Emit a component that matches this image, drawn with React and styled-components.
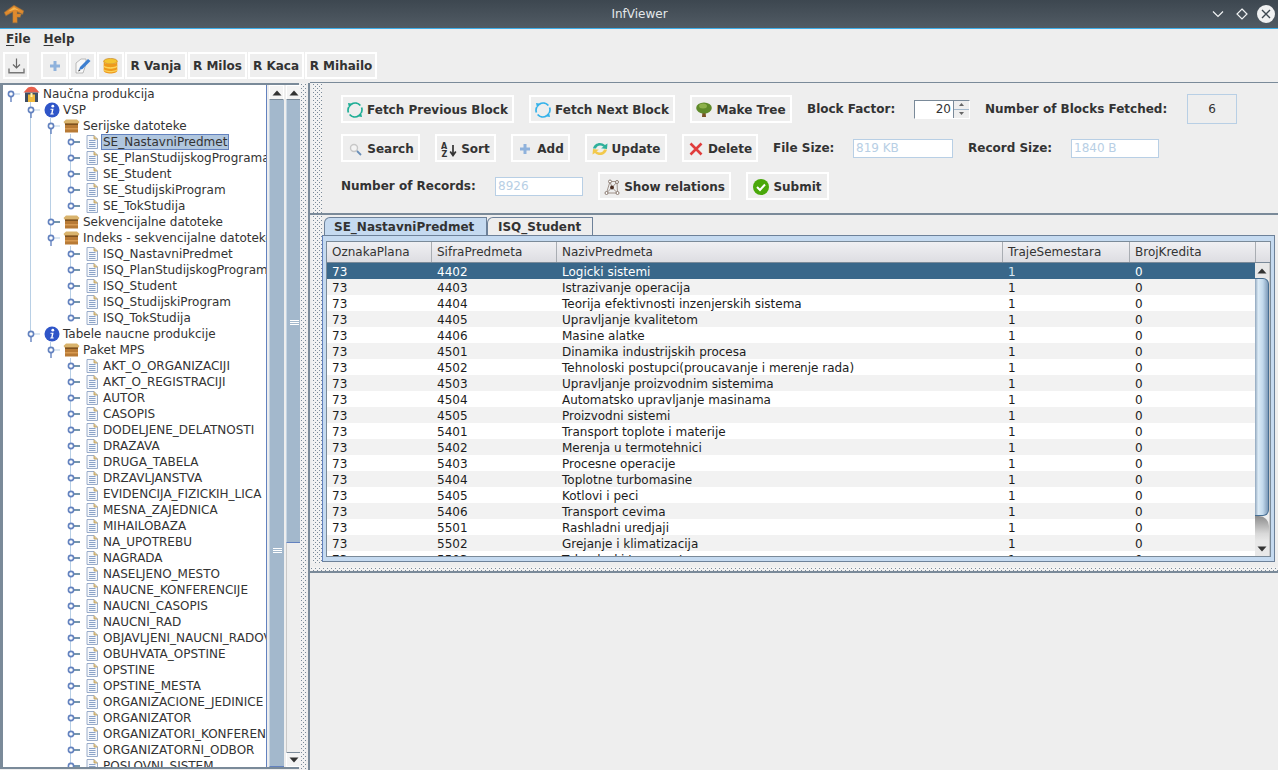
import React from 'react'
import styled, { createGlobalStyle, css } from 'styled-components'

const GlobalStyle = createGlobalStyle`
  html, body {
    margin: 0;
    padding: 0;
    background: #eeeeee;
    overflow: hidden;
  }
  * {
    box-sizing: border-box;
  }
`

// staggered dots, like the metal look and feel bumps
const bumps = css`
  background-color: #f2f2f2;
  background-image:
    conic-gradient(at 1px 1px, transparent 75%, #7a8a99 0),
    conic-gradient(at 1px 1px, transparent 75%, #7a8a99 0);
  background-size: 4px 4px, 4px 4px;
  background-position: 1px 1px, 3px 3px;
`

const Window = styled.div`
  width: 1278px;
  height: 770px;
  display: flex;
  flex-direction: column;
  overflow: hidden;
  font-family: 'DejaVu Sans', sans-serif;
  font-size: 12px;
  color: #333333;
  background: #eeeeee;
`

const TitleBar = styled.div`
  height: 29px;
  flex: none;
  display: grid;
  grid-template-columns: 1fr auto 1fr;
  align-items: center;
  padding: 0 3px 0 4px;
  background: linear-gradient(#3d4750, #515b64);
  border-bottom: 1px solid #3daee9;
`

const TitleText = styled.div`
  color: #e4e8ea;
  font-size: 12px;
`

const WindowButtons = styled.div`
  display: flex;
  align-items: center;
  justify-content: flex-end;
  gap: 8px;
`

const MenuBar = styled.div`
  height: 21px;
  flex: none;
  display: flex;
  gap: 13px;
  align-items: center;
  padding: 0 0 1px 6px;
`

const Menu = styled.span`
  font-weight: 700;
  font-size: 12px;
  color: #333333;

  u {
    text-underline-offset: 2px;
  }
`

const ToolBar = styled.div`
  height: 33px;
  flex: none;
  display: flex;
  align-items: flex-start;
  padding: 2px 0 0 3px;
`

const ToolGap = styled.div`
  width: 11px;
`

const ToolButton = styled.div`
  width: ${(p) => p.$w}px;
  height: 27px;
  margin-right: 1px;
  display: flex;
  align-items: center;
  justify-content: center;
  border: 2px solid #ffffff;
  font-weight: 700;
  font-size: 12px;
  color: #333333;
  white-space: nowrap;
`

const Main = styled.div`
  flex: 1;
  min-height: 0;
  display: flex;
`

const TreePane = styled.div`
  width: 299px;
  flex: none;
  display: flex;
  gap: 2px;
  margin-bottom: 1px;
  border-left: 3px solid #7a8a99;
  border-top: 2px solid #7a8a99;
  border-bottom: 2px solid #7a8a99;
  background: #eeeeee;
`

const Tree = styled.div`
  width: 264px;
  flex: none;
  overflow: hidden;
  padding-top: 1px;
  background: #ffffff;
  border-right: 1px solid #6382bf;
`

const TreeRow = styled.div`
  position: relative;
  height: 16px;
  display: flex;
  align-items: center;
  padding-left: ${(p) => 20 + p.$level * 20}px;
  white-space: nowrap;
`

const Guide = styled.span`
  position: absolute;
  left: ${(p) => p.$x}px;
  top: 0;
  width: 1px;
  height: ${(p) => (p.$half ? 8 : 16)}px;
  background: #b8cfe5;
`

const HandleWrap = styled.span`
  position: absolute;
  left: ${(p) => 4 + p.$level * 20}px;
  top: 2px;
  width: 16px;
  height: 14px;
  display: flex;
`

const NodeIcon = styled.span`
  width: 17px;
  height: 16px;
  margin-right: 3px;
  flex: none;
  display: flex;
  align-items: center;
  justify-content: center;
`

const NodeLabel = styled.span`
  line-height: 14px;
  padding: 0 1px;
  margin-left: -1px;
  color: #333333;
  ${(p) =>
    p.$selected &&
    css`
      background: #b0c6de;
      outline: 1px solid #6382bf;
    `}
`

const ScrollBar = styled.div`
  width: 15px;
  flex: none;
  display: flex;
  flex-direction: column;
  background: #eeeeee;
`

const ArrowButton = styled.div`
  height: 15px;
  flex: none;
  display: flex;
  align-items: center;
  justify-content: center;
  background: #f4f4f4;
  border: 1px solid #ffffff;
  border-top-color: ${(p) => (p.$down ? '#7a8a99' : '#ffffff')};
  border-bottom-color: ${(p) => (p.$down ? '#ffffff' : '#7a8a99')};
`

const Thumb = styled.div`
  height: ${(p) => (p.$h ? `${p.$h}px` : 'auto')};
  flex: ${(p) => (p.$h ? 'none' : '1')};
  min-height: 0;
  display: flex;
  flex-direction: column;
  align-items: center;
  padding-top: ${(p) => p.$grip}px;
  background: #a3b8cc;
  border-left: 1px solid #c6d5e3;
  border-bottom: 1px solid #6382bf;
`

const Grip = styled.div`
  width: 9px;
  height: 5px;
  flex: none;
  border-top: 1px solid #ffffff;
  border-bottom: 1px solid #ffffff;
  position: relative;

  &::after {
    content: '';
    position: absolute;
    left: 0;
    right: 0;
    top: 1px;
    height: 1px;
    background: #ffffff;
  }
`

const Track = styled.div`
  flex: 1;
  border-left: 1px solid #c9c9c9;
  background: #eeeeee;
`

const VSplit = styled.div`
  width: 11px;
  flex: none;
  display: flex;
  justify-content: center;
  padding-right: 1px;
  border-right: 2px solid #7a8a99;
`

const SplitDots = styled.div`
  width: 6px;
  ${bumps}
`

const Content = styled.div`
  flex: 1;
  min-width: 0;
  display: flex;
  flex-direction: column;
`

const FormPane = styled.div`
  height: 133px;
  flex: none;
  display: flex;
  border-top: 1px solid #7a8a99;
  border-bottom: 2px solid #7a8a99;
  margin-top: -1px;
`

const BumpStrip = styled.div`
  width: 10px;
  flex: none;
  margin-left: 2px;
  ${bumps}
`

const Form = styled.div`
  flex: 1;
  display: grid;
  grid-template-rows: 30px 28px 28px;
  row-gap: 10px;
  align-content: start;
  padding: 11px 0 0 19px;
`

const FormRow = styled.div`
  display: flex;
  align-items: center;
  gap: 15px;
`

const ActionButton = styled.div`
  width: ${(p) => p.$w}px;
  height: 28px;
  flex: none;
  display: flex;
  align-items: center;
  justify-content: center;
  gap: 4px;
  padding-top: 1px;
  border: 2px solid #ffffff;
  font-weight: 700;
  font-size: 12px;
  color: #333333;
  white-space: nowrap;

  svg {
    flex: none;
  }
`

const FieldLabel = styled.span`
  font-weight: 700;
  font-size: 12px;
  color: #333333;
  white-space: nowrap;
  width: ${(p) => (p.$w ? `${p.$w}px` : 'auto')};
  flex: none;
`

const TextField = styled.div`
  width: ${(p) => p.$w}px;
  height: ${(p) => p.$h || 19}px;
  flex: none;
  display: flex;
  align-items: center;
  justify-content: ${(p) => (p.$center ? 'center' : 'flex-start')};
  padding-left: ${(p) => (p.$center ? 0 : 2)}px;
  background: ${(p) => (p.$center ? '#eeeeee' : '#ffffff')};
  border: 1px solid #b8cfe5;
  color: ${(p) => (p.$center ? '#333333' : '#b8cfe5')};
  font-size: 12px;
`

const Spinner = styled.div`
  width: 56px;
  height: 19px;
  flex: none;
  display: flex;
  background: #ffffff;
  border-top: 1px solid #7a8a99;
  border-left: 1px solid #7a8a99;
  border-right: 1px solid #ffffff;
  border-bottom: 1px solid #ffffff;
`

const SpinnerValue = styled.div`
  flex: 1;
  text-align: right;
  line-height: 17px;
  padding-right: 2px;
  font-size: 12px;
  color: #333333;
`

const SpinnerButtons = styled.div`
  width: 16px;
  display: flex;
  flex-direction: column;
  border-left: 1px solid #7a8a99;
  background: #a3b8cc;
  gap: 1px;
`

const SpinnerButton = styled.div`
  flex: 1;
  background: #eeeeee;
  display: flex;
  align-items: center;
  justify-content: center;
`

const TabsPane = styled.div`
  height: 348px;
  flex: none;
  display: flex;
  background: #eeeeee;
`

const TabsColumn = styled.div`
  flex: 1;
  min-width: 0;
  display: flex;
  flex-direction: column;
  padding: 2px 3px 0 0;
`

const TabStrip = styled.div`
  height: 18px;
  flex: none;
  display: flex;
  padding-left: 2px;
  align-items: flex-end;
`

const Tab = styled.div`
  height: 18px;
  width: ${(p) => p.$w}px;
  display: flex;
  align-items: center;
  padding-left: ${(p) => (p.$active ? 9 : 10)}px;
  font-weight: 700;
  font-size: 12px;
  color: #333333;
  background: ${(p) => (p.$active ? '#c5daf0' : '#eeeeee')};
  border: 1px solid #6d8199;
  border-bottom: none;
  border-top-left-radius: 6px 6px;
`

const TabBody = styled.div`
  height: 327px;
  flex: none;
  display: flex;
  flex-direction: column;
  padding: 5px 3px 4px 3px;
  background: #c5daf0;
  border: 1px solid #6d8199;
  border-left-color: #6382bf;
`

const TableFrame = styled.div`
  flex: 1;
  min-height: 0;
  display: flex;
  flex-direction: column;
  background: #ffffff;
  border: 1px solid #7a8a99;
  overflow: hidden;
`

const HeaderRow = styled.div`
  height: 21px;
  flex: none;
  display: grid;
  grid-template-columns: 105px 125px 446px 127px 126px 1fr;
  background: linear-gradient(#f0f0f3, #dddde2);
  border-bottom: 1px solid #7a8a99;
`

const HeaderCell = styled.div`
  line-height: 20px;
  padding-left: 5px;
  border-right: 1px solid #a9adb3;
  color: #333333;
  &:last-child {
    border-right: none;
  }
`

const TableBody = styled.div`
  flex: 1;
  min-height: 0;
  display: flex;
`

const Rows = styled.div`
  flex: 1;
  min-width: 0;
  overflow: hidden;
`

const DataRow = styled.div`
  height: 16px;
  display: grid;
  grid-template-columns: 105px 125px 446px 127px 126px;
  padding-top: 1px;
  line-height: 16px;
  color: ${(p) => (p.$selected ? '#ffffff' : '#1c1c1c')};
  background: ${(p) =>
    p.$selected ? '#39678a' : p.$odd ? '#f2f2f2' : '#ffffff'};
`

const DataCell = styled.div`
  padding-left: 5px;
  white-space: nowrap;
  overflow: hidden;
  color: ${(p) => (p.$muted ? '#dbe7f2' : 'inherit')};
`

const TableScroll = styled.div`
  width: 15px;
  flex: none;
  display: flex;
  flex-direction: column;
  background: #eeeeee;
  border-right: 1px solid #c9c9c9;
`

const TableArrow = styled.div`
  height: 15px;
  flex: none;
  display: flex;
  align-items: center;
  justify-content: center;
  background: #e8e8e8;
`

const TableThumb = styled.div`
  flex: 1;
  background: linear-gradient(to right, #8fa6bd, #dcebf6 25%, #c2d9ec 60%, #7e9ab8);
  border-radius: 0 6px 6px 0;
  border: 1px solid #476f93;
  border-left: none;
`

const ThumbShade = styled.div`
  height: 25px;
  flex: none;
  background: linear-gradient(#8d8d8d, #d8d8d8 70%, #e8e8e8);
  border-top-right-radius: 10px;
`

const HSplit = styled.div`
  height: 10px;
  flex: none;
  display: flex;
  flex-direction: column;
  justify-content: center;
  padding-top: 3px;
  border-bottom: 2px solid #7a8a99;
`

const HSplitDots = styled.div`
  height: 4px;
  ${bumps}
`

const logoShape = 'M0.5 8.5 L10 1.5 L19.5 7 L18.5 10 L13 7.5 L13 10 L17 10 L16 13 L13 13 L13 18.5 L9 18.5 L9 7.5 L2 11.5 Z'

const Logo = () => (
  <svg width="20" height="20" viewBox="0 0 20 20">
    <path d={logoShape} fill="#e08a2e" stroke="#c9822e" strokeOpacity="0.45" strokeWidth="1.4" />
    <path d="M4 7.5 L10 3.2 L16 6.8 L11 5.5 L8 6.5 Z" fill="#f7b64e" />
  </svg>
)

const IconMinimize = () => (
  <svg width="18" height="14" viewBox="0 0 18 14">
    <path d="M4 4.5 L9 9.5 L14 4.5" fill="none" stroke="#f0f2f3" strokeWidth="1.2" />
  </svg>
)

const IconMaximize = () => (
  <svg width="14" height="14" viewBox="0 0 14 14">
    <path d="M7 2 L12 7 L7 12 L2 7 Z" fill="none" stroke="#f0f2f3" strokeWidth="1.2" />
  </svg>
)

const IconClose = () => (
  <svg width="18" height="18" viewBox="0 0 18 18">
    <circle cx="9" cy="9" r="9" fill="#f0f1f2" />
    <path d="M5 5 L13 13 M13 5 L5 13" stroke="#3d4750" strokeWidth="1.4" />
  </svg>
)

const IconDownload = () => (
  <svg width="17" height="16" viewBox="0 0 17 16">
    <path d="M8.5 0.5 V10 M5 6.5 L8.5 10 L12 6.5" fill="none" stroke="#666" strokeWidth="1.2" />
    <path d="M1 10.5 V14.8 H16 V10.5" fill="none" stroke="#777" strokeWidth="1.4" />
  </svg>
)

const IconPlus = () => (
  <svg width="16" height="16" viewBox="0 0 16 16">
    <path d="M6.5 3 H9.5 V6.5 H13 V9.5 H9.5 V13 H6.5 V9.5 H3 V6.5 H6.5 Z" fill="#8fb2dc" />
  </svg>
)

const IconEdit = () => (
  <svg width="16" height="16" viewBox="0 0 16 16">
    <path d="M1 5 L6 1 L11 1 L11 6 L8 15 L1 15 Z" fill="#f8f8f8" stroke="#aaa" strokeWidth="0.8" />
    <path d="M4 12 L5 9 L13 1 L15.5 3 L7.5 11 Z" fill="#3d7fd0" />
    <path d="M3 13.5 L4 11.5 L5.5 12.5 Z" fill="#333" />
  </svg>
)

const IconDatabase = () => (
  <svg width="15" height="16" viewBox="0 0 15 16">
    <ellipse cx="7.5" cy="3.2" rx="6.8" ry="2.8" fill="#f4c430" stroke="#c27a10" strokeWidth="0.6" />
    <path d="M0.7 3.2 V12.5 C0.7 16.5 14.3 16.5 14.3 12.5 V3.2 C14.3 7 0.7 7 0.7 3.2 Z" fill="#ee9a1c" />
    <path d="M0.7 6.8 C0.7 10 14.3 10 14.3 6.8 V8.2 C14.3 11.5 0.7 11.5 0.7 8.2 Z" fill="#fbd45a" />
    <path d="M0.7 10.5 C0.7 13.8 14.3 13.8 14.3 10.5 V11.7 C14.3 15 0.7 15 0.7 11.7 Z" fill="#fbd45a" />
  </svg>
)

const IconHome = () => (
  <svg width="17" height="16" viewBox="0 0 17 16">
    <path d="M0.5 6.5 L5 1.5 Q8.5 0 12 1.5 L16.5 6.5 Z" fill="#e8604c" />
    <rect x="2" y="6.5" width="13" height="9.5" fill="#3f4e63" />
    <rect x="5" y="8.5" width="7" height="7.5" fill="#f0b93c" />
    <rect x="7.5" y="7" width="2" height="4" fill="#fff2b0" />
  </svg>
)

const IconInfo = () => (
  <svg width="16" height="16" viewBox="0 0 16 16">
    <circle cx="8" cy="8" r="7.5" fill="#2f55c8" />
    <circle cx="8.8" cy="4.2" r="1.4" fill="#ffffff" />
    <path d="M6.6 6.8 H9.6 L8.6 11.6 H9.8 L9.6 12.6 H6.2 L6.4 11.6 H7.2 L7.9 7.8 H6.4 Z" fill="#ffffff" />
  </svg>
)

const IconBox = () => (
  <svg width="17" height="14" viewBox="0 0 17 14">
    <path d="M0.5 3 L3 0.5 H14 L16.5 3 L15 5 H2 Z" fill="#d9b36c" />
    <rect x="2" y="4.5" width="13" height="9" fill="#b87a35" />
    <rect x="2" y="4.5" width="13" height="1.5" fill="#7d5220" />
    <rect x="2" y="9" width="13" height="1.5" fill="#d79a52" />
  </svg>
)

const IconDoc = () => (
  <svg width="12" height="14" viewBox="0 0 12 14">
    <path d="M1 0.5 H8 L11.5 4 V13.5 H1 Z" fill="#f6f8fb" stroke="#8ea4c4" strokeWidth="0.9" />
    <path d="M8 0.5 V4 H11.5" fill="#e4c98e" stroke="#b79a5c" strokeWidth="0.8" />
    <path d="M3 5.5 H9.5 M3 7.5 H9.5 M3 9.5 H9.5 M3 11.5 H9.5" stroke="#7f98c2" strokeWidth="0.9" />
  </svg>
)

const Handle = ({ open }) => (
  <svg width="16" height="14" viewBox="0 0 16 14">
    {open ? (
      <path d="M4 6 V14" stroke="#6382bf" strokeWidth="1.4" />
    ) : (
      <path d="M7 6 H13" stroke="#39678a" strokeWidth="1.4" />
    )}
    {open && <path d="M7 6 H13" stroke="#b8cfe5" strokeWidth="1" />}
    <circle cx="4" cy="6" r="2.6" fill="#ffffff" stroke="#6382bf" strokeWidth="1.6" />
  </svg>
)

const ArrowUp = () => (
  <svg width="10" height="6" viewBox="0 0 10 6">
    <path d="M5 0.5 L9.5 5.5 H0.5 Z" fill="#333333" />
  </svg>
)

const ArrowDown = () => (
  <svg width="10" height="6" viewBox="0 0 10 6">
    <path d="M0.5 0.5 H9.5 L5 5.5 Z" fill="#333333" />
  </svg>
)

const IconRefresh = ({ color }) => (
  <svg width="16" height="16" viewBox="0 0 16 16">
    <path d="M4.5 2 A7 7 0 0 1 13.4 3.5 M11.5 14 A7 7 0 0 1 2.6 12.5 M1.4 10.5 A7 7 0 0 1 1.8 5 M14.6 5.5 A7 7 0 0 1 14.2 11"
      fill="none" stroke={color} strokeWidth="1.7" />
    <path d="M1 1 L6 1.8 L2 5.8 Z M15 15 L10 14.2 L14 10.2 Z" fill={color} />
  </svg>
)

const IconTree = () => (
  <svg width="16" height="16" viewBox="0 0 16 16">
    <path d="M6.5 9 H9.5 L10 15 H6 Z" fill="#7a5326" />
    <ellipse cx="8" cy="6" rx="7.8" ry="5.5" fill="#5f8a2a" />
    <ellipse cx="7" cy="4" rx="4" ry="2.5" fill="#8cb04a" />
  </svg>
)

const IconSearch = () => (
  <svg width="16" height="16" viewBox="0 0 16 16">
    <circle cx="7" cy="7" r="3.5" fill="#f4f4f4" stroke="#c8c8c8" strokeWidth="1.4" />
    <path d="M10 10 L14 14" stroke="#6a8fb8" strokeWidth="1.8" />
  </svg>
)

const IconSort = () => (
  <svg width="16" height="16" viewBox="0 0 16 16">
    <text x="0" y="7.5" fontSize="8" fontWeight="700" fontFamily="DejaVu Sans" fill="#333">A</text>
    <text x="0.5" y="15.5" fontSize="8" fontWeight="700" fontFamily="DejaVu Sans" fill="#333">Z</text>
    <path d="M12 4 V14 M9.2 10.5 L12 14.5 L14.8 10.5" fill="none" stroke="#333" strokeWidth="1.7" />
  </svg>
)

const IconUpdate = () => (
  <svg width="16" height="16" viewBox="0 0 16 16">
    <path d="M1 7.5 C2 2 9 0 13 4 L15.5 2.5 L15 8 L9 7.2 L11.5 5.8 C8.5 3.5 5 4.5 4 7.5 Z" fill="#2fb09b" />
    <path d="M15 8.5 C14 14 7 16 3 12 L0.5 13.5 L1 8 L7 8.8 L4.5 10.2 C7.5 12.5 11 11.5 12 8.5 Z" fill="#f2c94c" />
  </svg>
)

const IconDelete = () => (
  <svg width="16" height="16" viewBox="0 0 16 16">
    <path d="M2.5 2.5 L13.5 13.5 M13.5 2.5 L2.5 13.5" stroke="#e03c3c" strokeWidth="2.6" />
  </svg>
)

const IconRelations = () => (
  <svg width="16" height="16" viewBox="0 0 16 16">
    <path d="M8 8.5 L2.5 14 M8 8.5 L13.5 14 M8 8.5 L6 2.5 M8 8.5 L13 3 M2.5 14 H13.5 M6 2.5 L2.5 14 M13 3 L13.5 14 M6 2.5 H13"
      fill="none" stroke="#8a7a70" strokeWidth="0.8" />
    <circle cx="8" cy="8.5" r="1.9" fill="#4a2c20" />
    <circle cx="2.5" cy="14" r="1.5" fill="#fff" stroke="#8a7a70" />
    <circle cx="13.5" cy="14" r="1.5" fill="#fff" stroke="#8a7a70" />
    <circle cx="6" cy="2.5" r="1.5" fill="#fff" stroke="#8a7a70" />
    <circle cx="13" cy="3" r="1.5" fill="#fff" stroke="#8a7a70" />
  </svg>
)

const IconSubmit = () => (
  <svg width="16" height="16" viewBox="0 0 16 16">
    <circle cx="8" cy="8" r="8" fill="#4aa80a" />
    <path d="M4 8 L7 11 L12 5.5" fill="none" stroke="#ffffff" strokeWidth="2" />
  </svg>
)

const nodes = [
  [0, 'Naučna produkcija', 'home', true],
  [1, 'VSP', 'info', true],
  [2, 'Serijske datoteke', 'box', true],
  [3, 'SE_NastavniPredmet', 'doc'],
  [3, 'SE_PlanStudijskogPrograma', 'doc'],
  [3, 'SE_Student', 'doc'],
  [3, 'SE_StudijskiProgram', 'doc'],
  [3, 'SE_TokStudija', 'doc'],
  [2, 'Sekvencijalne datoteke', 'box'],
  [2, 'Indeks - sekvencijalne datoteke', 'box', true],
  [3, 'ISQ_NastavniPredmet', 'doc'],
  [3, 'ISQ_PlanStudijskogPrograma', 'doc'],
  [3, 'ISQ_Student', 'doc'],
  [3, 'ISQ_StudijskiProgram', 'doc'],
  [3, 'ISQ_TokStudija', 'doc'],
  [1, 'Tabele naucne produkcije', 'info', true],
  [2, 'Paket MPS', 'box', true],
  ...[
    'AKT_O_ORGANIZACIJI',
    'AKT_O_REGISTRACIJI',
    'AUTOR',
    'CASOPIS',
    'DODELJENE_DELATNOSTI',
    'DRAZAVA',
    'DRUGA_TABELA',
    'DRZAVLJANSTVA',
    'EVIDENCIJA_FIZICKIH_LICA',
    'MESNA_ZAJEDNICA',
    'MIHAILOBAZA',
    'NA_UPOTREBU',
    'NAGRADA',
    'NASELJENO_MESTO',
    'NAUCNE_KONFERENCIJE',
    'NAUCNI_CASOPIS',
    'NAUCNI_RAD',
    'OBJAVLJENI_NAUCNI_RADOVI',
    'OBUHVATA_OPSTINE',
    'OPSTINE',
    'OPSTINE_MESTA',
    'ORGANIZACIONE_JEDINICE',
    'ORGANIZATOR',
    'ORGANIZATORI_KONFERENCIJA',
    'ORGANIZATORNI_ODBOR',
    'POSLOVNI_SISTEM'
  ].map((name) => [3, name, 'doc'])
]

const nodeIcons = {
  home: <IconHome />,
  info: <IconInfo />,
  box: <IconBox />,
  doc: <IconDoc />
}

// does the vertical line of this level go on below row i
const continues = (i, level) => {
  for (let j = i + 1; j < nodes.length; j++) {
    if (nodes[j][0] < level) return false
    if (nodes[j][0] === level) return true
  }
  return level === 3
}

const subjects = [
  ['4402', 'Logicki sistemi'],
  ['4403', 'Istrazivanje operacija'],
  ['4404', 'Teorija efektivnosti inzenjerskih sistema'],
  ['4405', 'Upravljanje kvalitetom'],
  ['4406', 'Masine alatke'],
  ['4501', 'Dinamika industrijskih procesa'],
  ['4502', 'Tehnoloski postupci(proucavanje i merenje rada)'],
  ['4503', 'Upravljanje proizvodnim sistemima'],
  ['4504', 'Automatsko upravljanje masinama'],
  ['4505', 'Proizvodni sistemi'],
  ['5401', 'Transport toplote i materije'],
  ['5402', 'Merenja u termotehnici'],
  ['5403', 'Procesne operacije'],
  ['5404', 'Toplotne turbomasine'],
  ['5405', 'Kotlovi i peci'],
  ['5406', 'Transport cevima'],
  ['5501', 'Rashladni uredjaji'],
  ['5502', 'Grejanje i klimatizacija'],
  ['5503', 'Tehnoloski transport']
]

const columns = ['OznakaPlana', 'SifraPredmeta', 'NazivPredmeta', 'TrajeSemestara', 'BrojKredita']

const TreeView = () => (
  <Tree>
    {nodes.map(([level, label, icon, open], i) => (
      <TreeRow key={label} $level={level}>
        {[1, 2, 3].map((l) => {
          if (l > level) return null
          const x = 27 + (l - 1) * 20
          if (l === level) {
            return <Guide key={l} $x={x} $half={!continues(i, l)} />
          }
          return continues(i, l) ? <Guide key={l} $x={x} /> : null
        })}
        <HandleWrap $level={level}>
          <Handle open={open} />
        </HandleWrap>
        <NodeIcon>{nodeIcons[icon]}</NodeIcon>
        <NodeLabel $selected={i === 3}>{label}</NodeLabel>
      </TreeRow>
    ))}
  </Tree>
)

const App = () => (
  <Window>
    <GlobalStyle />
    <TitleBar>
      <Logo />
      <TitleText>InfViewer</TitleText>
      <WindowButtons>
        <IconMinimize />
        <IconMaximize />
        <IconClose />
      </WindowButtons>
    </TitleBar>

    <MenuBar>
      <Menu>
        <u>F</u>ile
      </Menu>
      <Menu>
        <u>H</u>elp
      </Menu>
    </MenuBar>

    <ToolBar>
      <ToolButton $w={26}>
        <IconDownload />
      </ToolButton>
      <ToolGap />
      <ToolButton $w={27}>
        <IconPlus />
      </ToolButton>
      <ToolButton $w={27}>
        <IconEdit />
      </ToolButton>
      <ToolButton $w={27}>
        <IconDatabase />
      </ToolButton>
      <ToolButton $w={62}>R Vanja</ToolButton>
      <ToolButton $w={59}>R Milos</ToolButton>
      <ToolButton $w={56}>R Kaca</ToolButton>
      <ToolButton $w={72}>R Mihailo</ToolButton>
    </ToolBar>

    <Main>
      <TreePane>
        <TreeView />
        <ScrollBar>
          <ArrowButton>
            <ArrowUp />
          </ArrowButton>
          <Thumb $grip={448}>
            <Grip />
          </Thumb>
        </ScrollBar>
        <ScrollBar>
          <ArrowButton>
            <ArrowUp />
          </ArrowButton>
          <Thumb $h={443} $grip={220}>
            <Grip />
          </Thumb>
          <Track />
          <ArrowButton $down>
            <ArrowDown />
          </ArrowButton>
        </ScrollBar>
      </TreePane>
      <VSplit>
        <SplitDots />
      </VSplit>
      <Content>
        <FormPane>
          <BumpStrip />
          <Form>
            <FormRow>
              <ActionButton $w={173}>
                <IconRefresh color="#1fae96" />
                Fetch Previous Block
              </ActionButton>
              <ActionButton $w={146}>
                <IconRefresh color="#35b2ea" />
                Fetch Next Block
              </ActionButton>
              <ActionButton $w={102}>
                <IconTree />
                Make Tree
              </ActionButton>
              <FieldLabel $w={92}>Block Factor:</FieldLabel>
              <Spinner>
                <SpinnerValue>20</SpinnerValue>
                <SpinnerButtons>
                  <SpinnerButton>
                    <svg width="5" height="3" viewBox="0 0 5 3">
                      <path d="M2.5 0 L5 3 H0 Z" fill="#666" />
                    </svg>
                  </SpinnerButton>
                  <SpinnerButton>
                    <svg width="5" height="3" viewBox="0 0 5 3">
                      <path d="M0 0 H5 L2.5 3 Z" fill="#666" />
                    </svg>
                  </SpinnerButton>
                </SpinnerButtons>
              </Spinner>
              <FieldLabel $w={187}>Number of Blocks Fetched:</FieldLabel>
              <TextField $w={50} $h={30} $center>
                6
              </TextField>
            </FormRow>
            <FormRow>
              <ActionButton $w={79}>
                <IconSearch />
                Search
              </ActionButton>
              <ActionButton $w={61}>
                <IconSort />
                Sort
              </ActionButton>
              <ActionButton $w={59}>
                <IconPlus />
                Add
              </ActionButton>
              <ActionButton $w={82}>
                <IconUpdate />
                Update
              </ActionButton>
              <ActionButton $w={76}>
                <IconDelete />
                Delete
              </ActionButton>
              <FieldLabel $w={65}>File Size:</FieldLabel>
              <TextField $w={100}>819 KB</TextField>
              <FieldLabel $w={88}>Record Size:</FieldLabel>
              <TextField $w={88}>1840 B</TextField>
            </FormRow>
            <FormRow>
              <FieldLabel $w={139}>Number of Records:</FieldLabel>
              <TextField $w={88}>8926</TextField>
              <ActionButton $w={133}>
                <IconRelations />
                Show relations
              </ActionButton>
              <ActionButton $w={83}>
                <IconSubmit />
                Submit
              </ActionButton>
            </FormRow>
          </Form>
        </FormPane>
        <TabsPane>
          <BumpStrip />
          <TabsColumn>
            <TabStrip>
              <Tab $active $w={163}>
                SE_NastavniPredmet
              </Tab>
              <Tab $w={106}>ISQ_Student</Tab>
            </TabStrip>
            <TabBody>
              <TableFrame>
                <HeaderRow>
                  {columns.map((name) => (
                    <HeaderCell key={name}>{name}</HeaderCell>
                  ))}
                  <HeaderCell />
                </HeaderRow>
                <TableBody>
                  <Rows>
                    {subjects.map(([code, name], i) => (
                      <DataRow key={code} $selected={i === 0} $odd={i % 2 === 1}>
                        <DataCell>73</DataCell>
                        <DataCell>{code}</DataCell>
                        <DataCell>{name}</DataCell>
                        <DataCell $muted={i === 0}>1</DataCell>
                        <DataCell>0</DataCell>
                      </DataRow>
                    ))}
                  </Rows>
                  <TableScroll>
                    <TableArrow>
                      <ArrowUp />
                    </TableArrow>
                    <TableThumb />
                    <ThumbShade />
                    <TableArrow>
                      <ArrowDown />
                    </TableArrow>
                  </TableScroll>
                </TableBody>
              </TableFrame>
            </TabBody>
          </TabsColumn>
        </TabsPane>
        <HSplit>
          <HSplitDots />
        </HSplit>
      </Content>
    </Main>
  </Window>
)

export default App
